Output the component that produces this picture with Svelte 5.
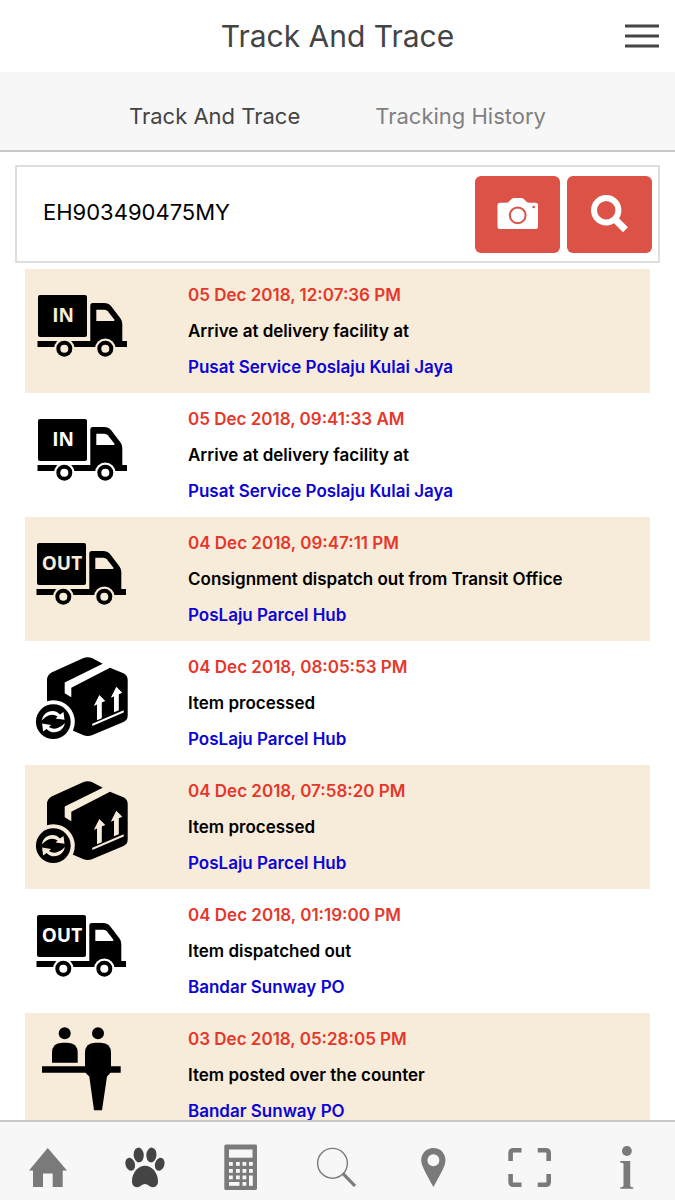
<script lang="ts">
  type Kind = 'in' | 'out' | 'processed' | 'counter';
  interface TrackEvent {
    kind: Kind;
    time: string;
    text: string;
    place: string;
  }

  let code = $state('EH903490475MY');

  const events: TrackEvent[] = [
    { kind: 'in', time: '05 Dec 2018, 12:07:36 PM', text: 'Arrive at delivery facility at', place: 'Pusat Service Poslaju Kulai Jaya' },
    { kind: 'in', time: '05 Dec 2018, 09:41:33 AM', text: 'Arrive at delivery facility at', place: 'Pusat Service Poslaju Kulai Jaya' },
    { kind: 'out', time: '04 Dec 2018, 09:47:11 PM', text: 'Consignment dispatch out from Transit Office', place: 'PosLaju Parcel Hub' },
    { kind: 'processed', time: '04 Dec 2018, 08:05:53 PM', text: 'Item processed', place: 'PosLaju Parcel Hub' },
    { kind: 'processed', time: '04 Dec 2018, 07:58:20 PM', text: 'Item processed', place: 'PosLaju Parcel Hub' },
    { kind: 'out', time: '04 Dec 2018, 01:19:00 PM', text: 'Item dispatched out', place: 'Bandar Sunway PO' },
    { kind: 'counter', time: '03 Dec 2018, 05:28:05 PM', text: 'Item posted over the counter', place: 'Bandar Sunway PO' }
  ];

  const turnArrow =
    'M16.6 71.5Q18 65 23.5 62.8Q30 60.4 35 65.5L38.5 63L39.5 70.8L30.5 69.5L32.7 67.5Q28.5 64.6 24 66.3Q20 67.8 16.6 71.5Z';

  const keys = [
    [12, 18], [19, 18], [25.5, 18], [32, 18],
    [12, 25], [19, 25], [25.5, 25], [32, 25],
    [12, 31.5], [19, 31.5], [25.5, 31.5], [25.5, 38]
  ];
</script>

{#snippet truck(label: string)}
  <rect x="13" y="18" width="49" height="42" rx="2" />
  <path d="M12.5 64H65.3V28.5Q65.3 26 67.8 26H79Q83.5 26 86 29L95.5 41.5Q97.3 44 97.3 47V64H102V70H12.5Z" />
  <path class="cut" d="M71.3 32.7H79.5Q81.5 32.7 82.8 34.3L89.3 42.5V44H71.3Z" />
  <circle class="cut" cx="39.3" cy="71.7" r="10.3" />
  <circle class="cut" cx="80.3" cy="71.7" r="10.3" />
  <circle cx="39.3" cy="71.7" r="8" />
  <circle cx="80.3" cy="71.7" r="8" />
  <circle class="cut" cx="39.3" cy="71.7" r="4" />
  <circle class="cut" cx="80.3" cy="71.7" r="4" />
  <text class="cut" x="38" y="45" text-anchor="middle">{label}</text>
{/snippet}

<div class="app">
  <header>
    <h1>Track And Trace</h1>
    <button class="menu" aria-label="Menu">
      <svg viewBox="0 0 34 24" width="34" height="24"><path d="M0 2H34M0 12H34M0 22H34" stroke="#444" stroke-width="3" /></svg>
    </button>
  </header>

  <nav class="tabs" aria-label="Tracking">
    <a href="#track" class="current">Track And Trace</a>
    <a href="#history">Tracking History</a>
  </nav>

  <main>
    <form class="search" onsubmit={(e) => e.preventDefault()}>
      <input type="text" aria-label="Tracking number" bind:value={code} />
      <button type="button" aria-label="Scan with camera">
        <svg viewBox="0 0 48 48" width="48" height="48">
          <path fill="#fff" d="M6 11.7H12Q14 11.7 15 10.5L17.5 8Q18.5 7 20 7H27.3Q28.8 7 29.8 8L32.3 10.5Q33.3 11.7 35.3 11.7H41.5Q44 11.7 44 14.2V35.5Q44 38 41.5 38H6Q3.5 38 3.5 35.5V14.2Q3.5 11.7 6 11.7Z" />
          <circle cx="23.7" cy="24.3" r="7.9" fill="none" stroke="#dd5246" stroke-width="2" />
          <circle cx="39.7" cy="16" r="1.3" fill="#dd5246" />
        </svg>
      </button>
      <button type="submit" aria-label="Search">
        <svg viewBox="0 0 48 48" width="48" height="48" fill="none" stroke="#fff">
          <circle cx="20.2" cy="19.3" r="12.2" stroke-width="6" />
          <path d="M28.5 27.8L39.5 38.7" stroke-width="7" />
        </svg>
      </button>
    </form>

    <ol>
      {#each events as event}
        <li>
          <svg class="status" viewBox="0 0 120 108" width="120" height="108" aria-hidden="true">
            {#if event.kind === 'in'}
              {@render truck('IN')}
            {:else if event.kind === 'out'}
              <g transform="translate(-1 0)">{@render truck('OUT')}</g>
            {:else if event.kind === 'processed'}
              <path d="M22 31Q22 26 26.5 23.5L58 9.3Q62.7 7.3 67.4 9.3L77.7 14.8L39.7 33.5V44.3L46.3 48.3V38.7L85 18.7L99 24.5Q102.7 26.5 102.7 31V66.5Q102.7 71 98.5 73L67.5 86Q62.7 88 58 86L44 80L22 60Z" />
              <circle class="cut" cx="28.3" cy="72.7" r="21.5" />
              <circle cx="28.3" cy="72.7" r="17.4" />
              <path class="cut" d="M74.3 46L80.3 52L76.8 53.5V69.3L72 71.3V55.6L68.8 57ZM91.3 37.7L97.3 43.7L93.8 45.2V61.2L89 63.2V47.4L85.8 48.8ZM67.3 74.7L98.7 61.3V63.6L67.3 77Z" />
              <path class="cut" d={turnArrow} />
              <path class="cut" transform="rotate(180 28.3 72.7)" d={turnArrow} />
            {:else}
              <circle cx="39.7" cy="12.2" r="6" />
              <circle cx="73" cy="12.2" r="6" />
              <path d="M27 41.7V32Q27 21.7 37.3 21.7H42.4Q52.7 21.7 52.7 32V41.7Z" />
              <path d="M17 45.3H95.7V51.7H17Z" />
              <path d="M60 50.5V32Q60 21.7 70.3 21.7H75.7Q86 21.7 86 32V50.5Q84.5 53.5 82 55.5L77 89.2H69L64.3 55.5Q61.5 53.5 60 50.5Z" />
            {/if}
          </svg>
          <div class="details">
            <time>{event.time}</time>
            <p>{event.text}</p>
            <p class="place">{event.place}</p>
          </div>
        </li>
      {/each}
    </ol>
  </main>

  <nav class="bar" aria-label="Main">
    <a href="#home" aria-label="Home">
      <svg viewBox="0 0 48 48"><path d="M23.7 4L43 26.5H38.7V43H28.7V29.5H19V43H9V26.5H5Z" /></svg>
    </a>
    <a href="#track" aria-label="Track" class="current">
      <svg viewBox="0 0 48 48">
        <ellipse cx="17.7" cy="11" rx="5.1" ry="7.4" transform="rotate(-5 17.7 11)" />
        <ellipse cx="30.4" cy="11" rx="5.1" ry="7.4" transform="rotate(5 30.4 11)" />
        <ellipse cx="9.2" cy="20.3" rx="4.7" ry="6.6" transform="rotate(-18 9.2 20.3)" />
        <ellipse cx="38.7" cy="20.3" rx="4.7" ry="6.6" transform="rotate(18 38.7 20.3)" />
        <path d="M24 21.8C31 21.8 37 29 37 37C37 41 35 43.2 32 43.2C28.5 43.2 27 40 24 40C21 40 19.5 43.2 16 43.2C13 43.2 11 41 11 37C11 29 17 21.8 24 21.8Z" />
      </svg>
    </a>
    <a href="#rates" aria-label="Rate calculator">
      <svg viewBox="0 0 48 48">
        <rect x="7.3" y="0.5" width="32.7" height="45.5" rx="1.5" />
        <g fill="#f7f7f7">
          <rect x="12" y="5.5" width="23.5" height="8.2" />
          {#each keys as [x, y]}<rect {x} {y} width="3.8" height="3.8" />{/each}
          <rect x="12" y="38" width="10.5" height="3.8" />
          <rect x="32" y="31.5" width="3.8" height="10.3" />
        </g>
      </svg>
    </a>
    <a href="#search" aria-label="Search">
      <svg viewBox="0 0 48 48">
        <g fill="none" stroke="#7a7a7a">
          <circle cx="19.5" cy="19.3" r="14.9" stroke-width="1.4" />
          <path d="M30 29.7L42 42" stroke-width="3.2" />
        </g>
      </svg>
    </a>
    <a href="#outlets" aria-label="Outlets">
      <svg viewBox="0 0 48 48"><path fill-rule="evenodd" d="M23.4 4C30.5 4 35.5 9.5 35.5 16.2C35.5 22 30 31 23.4 43C17 31 11.2 22 11.2 16.2C11.2 9.5 16.5 4 23.4 4ZM23.4 10.3A6 6 0 1 0 23.4 22.3A6 6 0 1 0 23.4 10.3Z" /></svg>
    </a>
    <a href="#scan" aria-label="Scan">
      <svg viewBox="0 0 48 48"><path fill="none" stroke="#7a7a7a" stroke-width="4.6" d="M15.5 6.2H7.5Q4.6 6.2 4.6 9V17M31.7 6.2H39.8Q42.7 6.2 42.7 9V17M15.5 40.8H7.5Q4.6 40.8 4.6 38V30M31.7 40.8H39.8Q42.7 40.8 42.7 38V30" /></svg>
    </a>
    <a href="#info" aria-label="Information">
      <svg viewBox="0 0 48 48"><circle cx="23.9" cy="7" r="4.9" /><path d="M17.2 17H27.2V41.5Q27.2 43.3 30.2 43.3V44.8H17.2V43.3Q20.5 43.3 20.5 41.5V20Q20.5 18.4 17.2 18.4Z" /></svg>
    </a>
  </nav>
</div>

<style>
  :global(body) {
    margin: 0;
    background: #fff;
  }
  .app {
    display: flex;
    flex-direction: column;
    height: 100vh;
    font-family: Inter, 'Liberation Sans', sans-serif;
    color: #000;
  }
  svg {
    display: block;
    flex: none;
  }
  button {
    padding: 0;
    border: 0;
    cursor: pointer;
  }
  header {
    display: grid;
    grid-template-columns: 1fr auto 1fr;
    align-items: center;
    flex: none;
    height: 72px;
    padding: 0 16px;
    box-sizing: border-box;
  }
  h1 {
    grid-column: 2;
    margin: 0;
    font-size: 30px;
    font-weight: 400;
    line-height: 40px;
    color: #444;
  }
  .menu {
    justify-self: end;
    background: none;
  }
  .tabs {
    display: flex;
    justify-content: center;
    align-items: center;
    gap: 75px;
    flex: none;
    padding: 29px 0 19px;
    background: #f7f7f7;
    border-bottom: 2px solid #c8c8c8;
  }
  .tabs a {
    font-size: 22px;
    line-height: 30px;
    color: #808080;
    text-decoration: none;
  }
  .tabs a.current {
    color: #444;
  }
  main {
    flex: 1;
    min-height: 0;
    overflow-y: auto;
    scrollbar-width: none;
    padding-top: 13px;
  }
  .search {
    display: flex;
    align-items: center;
    gap: 7px;
    margin: 0 15px 6px;
    padding: 9px 6px 8px 26px;
    border: 2px solid #dedede;
  }
  .search input {
    flex: 1;
    min-width: 0;
    height: 76px;
    padding: 0 0 6px;
    border: 0;
    outline: 0;
    box-sizing: border-box;
    background: none;
    font: 400 22px Inter, 'Liberation Sans', sans-serif;
    color: #000;
  }
  .search button {
    display: flex;
    justify-content: center;
    align-items: center;
    flex: none;
    width: 85px;
    height: 77px;
    border-radius: 6px;
    background: #dd5246;
  }
  ol {
    margin: 0 25px;
    padding: 0;
    list-style: none;
  }
  li {
    --row: #fff;
    display: flex;
    gap: 43px;
    padding: 8px 0;
    background: var(--row);
  }
  li:nth-child(odd) {
    --row: #f7ebda;
  }
  .cut {
    fill: var(--row);
  }
  .status text {
    font: 700 19px 'Open Sans', 'Noto Sans', sans-serif;
  }
  .details {
    font-size: 17px;
    font-weight: 600;
    line-height: 36px;
  }
  .details time {
    display: block;
    color: #e5382b;
  }
  .details p {
    margin: 0;
  }
  .details .place {
    color: #0c04d4;
  }
  .bar {
    display: flex;
    flex: none;
    padding: 22px 0 8px;
    background: #f7f7f7;
    border-top: 2px solid #c8c8c8;
  }
  .bar a {
    display: flex;
    justify-content: center;
    flex: 1;
    fill: #7a7a7a;
  }
  .bar a.current {
    fill: #444;
  }
  .bar svg {
    width: 48px;
    height: 48px;
  }
</style>
